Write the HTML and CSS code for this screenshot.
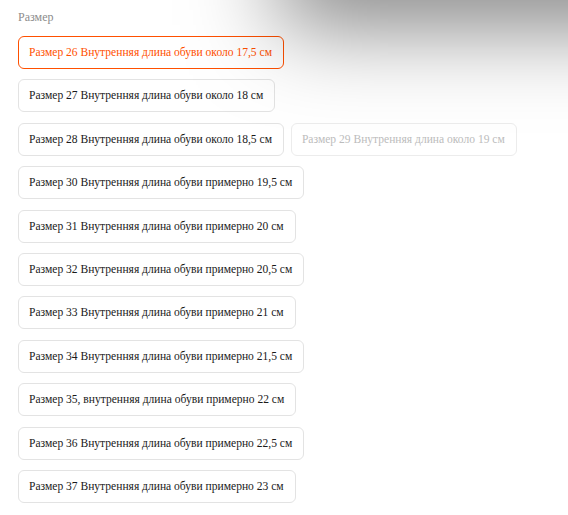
FILE: index.html
```html
<!DOCTYPE html>
<html lang="ru">
<head>
<meta charset="utf-8">
<link rel="stylesheet" href="styles.css">
</head>
<body>
<div class="shade"></div>
<div class="panel">
  <div class="label">Размер</div>
  <div class="options">
    <div class="opt selected">Размер 26 Внутренняя длина обуви около 17,5 см</div>
    <div class="opt">Размер 27 Внутренняя длина обуви около 18 см</div>
    <div class="opt">Размер 28 Внутренняя длина обуви около 18,5 см</div>
    <div class="opt disabled">Размер 29 Внутренняя длина около 19 см</div>
    <div class="opt">Размер 30 Внутренняя длина обуви примерно 19,5 см</div>
    <div class="opt">Размер 31 Внутренняя длина обуви примерно 20 см</div>
    <div class="opt">Размер 32 Внутренняя длина обуви примерно 20,5 см</div>
    <div class="opt">Размер 33 Внутренняя длина обуви примерно 21 см</div>
    <div class="opt">Размер 34 Внутренняя длина обуви примерно 21,5 см</div>
    <div class="opt">Размер 35, внутренняя длина обуви примерно 22 см</div>
    <div class="opt">Размер 36 Внутренняя длина обуви примерно 22,5 см</div>
    <div class="opt">Размер 37 Внутренняя длина обуви примерно 23 см</div>
  </div>
</div>
</body>
</html>
```

FILE: styles.css
```css
html, body {
  margin: 0;
  padding: 0;
  background: #fff;
  overflow: hidden;
}
body {
  font-family: "Liberation Serif", "Times New Roman", serif;
  font-size: 11.55px;
  color: #1a1a1a;
  width: 568px;
  height: 515px;
  position: relative;
}
.shade {
  position: absolute;
  top: -60px;
  left: 305px;
  width: 440px;
  height: 60px;
  box-shadow: 0 0 90px 25px rgba(0, 0, 0, 0.5);
  pointer-events: none;
}
.panel {
  padding: 9px 18px 0 18px;
  width: 520px;
}
.label {
  color: #8c8c8c;
  font-size: 12px;
  line-height: 16px;
  margin-bottom: 11px;
}
.options {
  display: flex;
  flex-wrap: wrap;
  row-gap: 10.4px;
  column-gap: 7px;
}
.opt {
  box-sizing: border-box;
  height: 33px;
  line-height: 31px;
  padding: 0 11px 0 10px;
  border: 1px solid #e3e3e3;
  border-radius: 6px;
  white-space: nowrap;
  background: #fff;
}
.opt.selected {
  border-color: #ff5000;
  color: #ff5000;
}
.opt.disabled {
  color: #bcbcbc;
  border-color: #ececec;
}
```
